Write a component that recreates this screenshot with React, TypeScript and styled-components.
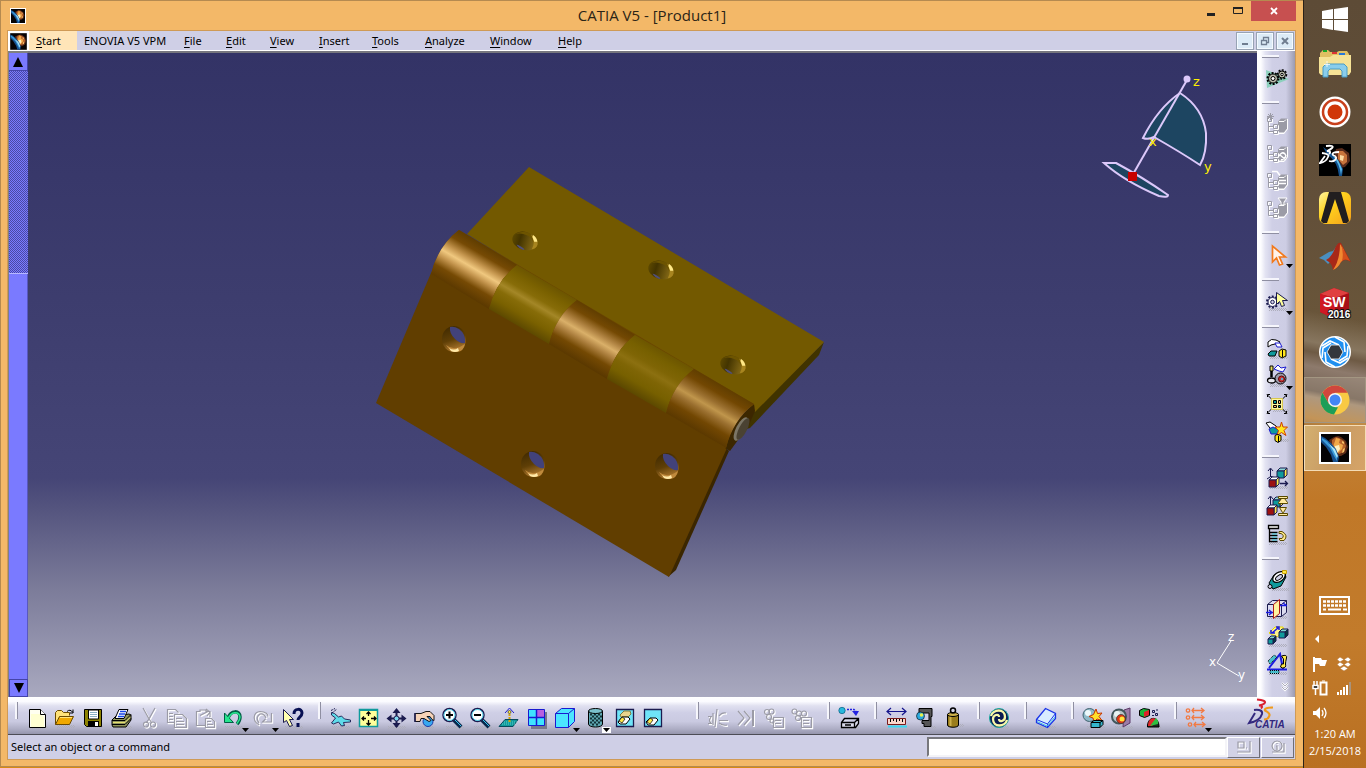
import React from "react";
import styled, { createGlobalStyle, css } from "styled-components";

const Global = createGlobalStyle`
  *, *::before, *::after { box-sizing: border-box; }
  body { margin: 0; background: #d98a12; font-family: "Noto Sans", "Open Sans", sans-serif; font-size: 11px; color: #000; }
  button, input { font: inherit; color: inherit; margin: 0; padding: 0; border: 0; background: none; border-radius: 0; }
  svg { display: block; }
`;

/* ---------- page frame ---------- */
const Desktop = styled.div`
  display: grid;
  grid-template-columns: minmax(0, 1fr) 63px;
  min-height: 100vh;
`;
const Window = styled.main`
  display: flex;
  flex-direction: column;
  background: #f3b868;
  border: 1px solid #b58a50;
  border-right: 0;
  padding: 0 8px 7px 7px;
  margin-bottom: 1px;
`;
const TitleBar = styled.header`
  display: grid;
  grid-template-columns: 100px 1fr 100px;
  height: 30px;
  margin-right: -1px;
`;
const AppIcon = styled.div`
  padding: 7px 0 0 2px;
`;
const Title = styled.h1`
  margin: 0;
  font-family: "Open Sans", "Noto Sans", sans-serif;
  font-size: 15px;
  font-weight: 400;
  line-height: 29px;
  text-align: center;
  color: #2b2416;
`;
const Caption = styled.div`
  display: flex;
  justify-content: flex-end;
`;
const CaptionButton = styled.button<{ $close?: boolean }>`
  display: grid;
  place-items: center;
  width: ${(p) => (p.$close ? 45 : 27)}px;
  height: 20px;
  background: ${(p) => (p.$close ? "#c75050" : "transparent")};
`;
const Client = styled.div`
  flex: 1;
  display: flex;
  flex-direction: column;
  outline: 1px solid #cf9a56;
  background: #cfcfe6;
`;

/* ---------- menu ---------- */
const MenuBar = styled.nav`
  display: flex;
  height: 20px;
  background: #cfcfe6;
  border-bottom: 1px solid #fff;
`;
const MenuIcon = styled.div`
  width: 21px;
  padding: 1px 0 0 1px;
  background: #fff;
`;
const MenuItem = styled.button<{ $active?: boolean; $width: number; $pad?: number }>`
  width: ${(p) => p.$width}px;
  padding-left: ${(p) => p.$pad ?? 12}px;
  text-align: left;
  line-height: 19px;
  white-space: nowrap;
  background: ${(p) => (p.$active ? "#ffe5b8" : "transparent")};
  u { text-underline-offset: 2px; }
`;
const MdiButtons = styled.div`
  display: flex;
  gap: 2px;
  margin-left: auto;
  padding: 1px 1px 0 0;
`;
const MdiButton = styled.button`
  display: grid;
  place-items: center;
  width: 18px;
  height: 18px;
  border: 1px solid #97a3b4;
  background: #dcebf7;
  box-shadow: inset 0 0 0 1px #f4faff;
`;

/* ---------- work area ---------- */
const WorkArea = styled.div`
  flex: 1;
  display: grid;
  grid-template-columns: 20px minmax(0, 1fr) 38px;
  min-height: 645px;
`;
const ScrollRail = styled.div`
  display: flex;
  flex-direction: column;
  border: 1px solid #808080;
  border-width: 2px 0 0 1px;
  background: #7a7aff;
`;
const ScrollButton = styled.button<{ $down?: boolean }>`
  display: grid;
  place-items: center;
  height: 18px;
  border: 1px solid #4444a8;
  border-width: ${(p) => (p.$down ? "1px" : "0 1px 1px 0")};
  background: #7a7aff;
`;
const ScrollTrack = styled.div`
  height: 203px;
  background: repeating-conic-gradient(#7a7aff 0 25%, #4a4aa4 0 50%) 0 0 / 2px 2px;
  border-bottom: 1px solid #b8b8ff;
`;
const ScrollThumb = styled.div`
  flex: 1;
  border-right: 1px solid #5858c0;
`;
const Viewport = styled.section`
  position: relative;
  border-top: 2px solid #76767e;
  background: linear-gradient(#333366 0, #3d3d6e 38%, #454576 66%, #55557f 71%, #7b7b99 83%, #a9a9bf 100%);
`;
const Scene = styled.svg`
  position: absolute;
  inset: 0;
  width: 100%;
  height: 100%;
`;

/* ---------- toolbars ---------- */
const SideBar = styled.aside`
  display: flex;
  flex-direction: column;
  gap: 9px;
  padding: 4px 0 0 6px;
  background: linear-gradient(90deg, #fff 0, #fdfdff 10%, #e3e3f2 22%, #cfcfe6 40%, #cdcde4 76%, #b0b0c6 90%, #9a9ab0 100%);
`;
const BottomBar = styled.div`
  display: flex;
  gap: 11px;
  height: 38px;
  padding-left: 7px;
  border-bottom: 1px solid #4d4d55;
  background: linear-gradient(#fff 0, #fbfbff 12%, #e0e0f0 24%, #cfcfe6 42%, #cacae1 66%, #aeaec5 86%, #9696ac 100%);
`;
const ToolGroup = styled.div<{ $vertical?: boolean; $far?: boolean }>`
  display: flex;
  flex-direction: ${(p) => (p.$vertical ? "column" : "row")};
  margin-left: ${(p) => (p.$far ? 19 : 0)}px;
`;
const Grip = styled.div<{ $vertical?: boolean }>`
  background: #f6f6fc;
  ${(p) =>
    p.$vertical
      ? css`width: 17px; height: 3px; margin: 0 0 6px -1px; border-bottom: 1px solid #8f8fa2;`
      : css`width: 3px; height: 17px; margin: 5px 5px 0 0; border-right: 1px solid #8f8fa2;`}
`;
const ToolButton = styled.button<{ $vertical?: boolean; $wide?: boolean }>`
  position: relative;
  width: ${(p) => (p.$wide && !p.$vertical ? 30 : 28)}px;
  height: ${(p) => (p.$wide && p.$vertical ? 29 : 28)}px;
  padding: 2px;
  margin-top: ${(p) => (p.$vertical ? 0 : 7)}px;
`;
const DropMark = styled.svg<{ $lit?: boolean }>`
  position: absolute;
  left: 22px;
  top: 23px;
  padding: 1px;
  background: ${(p) => (p.$lit ? "#fff" : "transparent")};
`;
const Chevron = styled.div`
  padding-left: 18px;
  margin-top: -5px;
`;
const Brand = styled.div`
  margin: 1px 5px 0 auto;
`;

/* ---------- status ---------- */
const StatusBar = styled.footer`
  display: flex;
  align-items: center;
  height: 24px;
  padding: 0 0 0 3px;
  background: #cfcfe6;
`;
const StatusText = styled.span`
  flex: 1;
  line-height: 16px;
`;
const CommandInput = styled.input`
  width: 300px;
  height: 20px;
  border: 2px solid;
  border-color: #77777c #f4f4f8 #f4f4f8 #77777c;
  background: #fff;
  outline: 0;
`;
const StatusButton = styled.button`
  display: grid;
  place-items: center;
  width: 33px;
  height: 21px;
  margin-right: 1px;
  border: 1px solid;
  border-color: #fff #6e6e78 #6e6e78 #fff;
  background: #d2d2e6;
`;

/* ---------- taskbar ---------- */
const Taskbar = styled.aside`
  display: flex;
  flex-direction: column;
  border-left: 1px solid #2a2118;
  background:
    linear-gradient(11deg, transparent 0 334px, #c58a3e 345px, #a98f72 366px, #756354 372px, #8d7a6c 396px, #6e5a44 410px, #87765f 420px, transparent 450px),
    linear-gradient(#5d4b36 0, #624f39 200px, #6a563a 330px, #7b6549 400px, #c28035 445px, #c07828 500px, #c27b2b 640px, #b97022 100%);
`;
const TaskButton = styled.button<{ $state?: "open" | "active"; $short?: boolean }>`
  display: grid;
  place-items: center;
  height: ${(p) => (p.$short ? 40 : 46)}px;
  margin: ${(p) => (p.$short ? "0" : "1px 0")};
  ${(p) =>
    p.$state === "open" &&
    css`border: 1px solid #a39682; background: rgba(190, 180, 165, 0.25);`}
  ${(p) =>
    p.$state === "active" &&
    css`border: 1px solid #f4dcb6; background: linear-gradient(110deg, #d4b070, #c99c64 50%, #d6a468);`}
`;
const Tray = styled.div`
  margin-top: auto;
  padding-bottom: 9px;
  color: #fff;
`;
const TrayRow = styled.div<{ $h: number; $left?: number }>`
  display: flex;
  align-items: center;
  gap: 8px;
  height: ${(p) => p.$h}px;
  padding-left: ${(p) => p.$left ?? 8}px;
`;
const Clock = styled.time`
  display: block;
  font-family: "Open Sans", "Noto Sans", sans-serif;
  line-height: 17px;
  text-align: center;
  white-space: nowrap;
`;

/* ---------- icon drawings, all on a 24px grid ---------- */
const K = "#000";
const N = "#1b1b4f";
const G = "#9b9ba6";
const T = "#0f9a9c";
const Y = "#ffe94a";

const Shade = ({ x = 4, y = 19 }: { x?: number; y?: number }) => (
  <path d={`M${x} ${y + 0.5}h18M${x + 1} ${y + 1.5}h18M${x} ${y + 2.5}h17`} stroke="#aeaebc" strokeDasharray="1 1" />
);
const Emboss = ({ children }: { children: React.ReactNode }) => (
  <>
    <g transform="translate(1 1)" stroke="#fff" fill="none" strokeWidth={1.4}>{children}</g>
    <g stroke={G} fill="none" strokeWidth={1.2}>{children}</g>
  </>
);
/* Disabled product-tree glyph: branch lines, nodes and a solid part */
const Tree = ({ children }: { children?: React.ReactNode }) => (
  <>
    <path d="M14 10l3-3h6v10l-4 5h-9v-2h4z" fill="#fff" />
    <path d="M13 9.500l3-3h6v10l-3 4h-6z" fill={G} />
    <path d="M14 9.500h5l2-2" stroke="#fff" fill="none" />
    <Emboss><path d="M3.500 9v10.500h5M3.500 14.500h5M2.500 5.500h4v4h-4zM8.500 12.500h4v4h-4zM8.500 18.500h4v3h-4z" strokeWidth={1} /></Emboss>
    {children}
  </>
);
const Cube = ({ x, y, s, f, t, r }: { x: number; y: number; s: number; f: string; t: string; r: string }) => (
  <g stroke={N}>
    <path d={`M${x} ${y}l3-3h${s}l-3 3z`} fill={t} />
    <path d={`M${x + s} ${y}l3-3v${s}l-3 3z`} fill={r} />
    <path d={`M${x} ${y}h${s}v${s}h-${s}z`} fill={f} />
  </g>
);
const Glass = ({ plus }: { plus?: boolean }) => (
  <>
    <Shade x={6} y={20} />
    <path d="M14 14l7 7" stroke="#0a2a4e" strokeWidth="4" />
    <path d="M14 13l7 7" stroke="#38c8f0" />
    <circle cx="9.500" cy="9" r="6.500" fill="#fff" stroke={N} strokeWidth="1.500" />
    <circle cx="9.500" cy="9" r="5.500" fill="none" stroke="#4bd0e8" />
    <path d={plus ? "M9.500 5.500v7M6 9h7" : "M6 9h7"} stroke={K} strokeWidth="2" />
  </>
);

const icons: Record<string, React.ReactNode> = {
  new: <><Shade x={5} y={20} /><path d="M4.500 3.500h11l5 5v13h-16z" fill="#fffff0" stroke={K} /><path d="M6 8h9l4 3v10H6z" fill="#ffffd2" /><path d="M15.500 3.500v5h5" fill="#fff" stroke={K} /></>,
  open: <><Shade /><path d="M2.500 18.500v-12l2-2h4l2 2h6v3" fill="#ffe27a" stroke="#6b4a00" /><path d="M2.500 18.500l4-8h14l-4 8z" fill="#f0a800" stroke="#6b4a00" /><path d="M7 11.500h12" stroke="#ffe27a" /><path d="M14 5.500q3-3 6 1m0-3v3.500h-3" stroke={K} fill="none" /></>,
  save: <><Shade /><path d="M3.500 3.500h17v17h-15l-2-2z" fill="#8d8200" stroke={K} /><path d="M7.500 4h10v9h-10z" fill="#fff" stroke={K} /><path d="M9 6.500h7M9 8.500h7M9 10.500h7" stroke="#8ab0c4" /><path d="M7 15h11v5.500H7z" fill={K} /><path d="M14 16h3v4h-3z" fill="#fff" /></>,
  print: <><Shade x={5} y={20} /><path d="M3 14l4-4 13-2 2 1v5l-5 7H4l-1-2z" fill="#8f945c" stroke={K} /><path d="M10 3.500h9l-4 9H6z" fill="#fff" stroke={K} /><path d="M11 5.500h6M10 8h6M9 10.500h6" stroke="#1845e8" strokeWidth="1.500" /><path d="M3 14.500h13l6-6M3 18.500h13l6-6" fill="none" stroke={K} /><path d="M4 16.500h12l5-5" fill="none" stroke="#e8e070" /></>,
  cut: <Emboss><path d="M6 2l6 11 3 4M18 2l-6 11-3 4M9 16a2.500 2.500 0 1 0 0 5 2.500 2.500 0 0 0 0-5M16 16a2.500 2.500 0 1 0 0 5 2.500 2.500 0 0 0 0-5" /></Emboss>,
  copy: <Emboss><path d="M2.500 3.500h8l3 3M2.500 3v13.500H9M4 7.500h4M4 10.500h4M4 13.500h4M9.500 8.500h8l4 4v9h-12zM11 12.500h6M11 15.500h8M11 18.500h8" /></Emboss>,
  paste: <Emboss><path d="M12 19.500H3.500v-14H7V4h6v1.500h4V11M7 9.500l8-4M13 3l4 3-3 4M12.500 12.500h6l3 3v6h-9zM14 15.500h4M14 18.500h6" /></Emboss>,
  undo: <><Shade y={20} /><path d="M7 12C10 4 19 4 19 11q0 4-3 7" fill="none" stroke="#005e45" strokeWidth="3.500" /><path d="M3.500 7v9.500h9z" fill="#26e68e" stroke="#005e45" /><path d="M7 13C10 5 18 5 19 11q0 3-3 6.500" fill="none" stroke="#26e68e" strokeWidth="1.500" /></>,
  redo: <Emboss><path d="M8 19C1 15 2 6 9 5.500c6 0 8 3 8 5M20.500 7v9h-9l3-3M8 17Q4 11 9 8q4-1 6 4" /></Emboss>,
  help: <><Shade y={20} /><path d="M13 8c0-6 8-6 8-1 0 4-4 4-4 7M17 17v4" stroke="#070f52" fill="none" strokeWidth="3" /><path d="M2.500 3.500v13l3-2 3 6 3-1-3-6h4z" fill="#ffffb0" stroke={N} /></>,
  fly: <><Shade y={20} /><path d="M3.500 6.500l3 1 4 3.500 3-1 3 3 6 1v2l-7 .5 1 3-3 .5-3-4-5 2-2-1 4-5-4-3z" fill="#5fdcea" stroke={N} strokeWidth=".9" /><path d="M3 4.500l4-2M4 7l5-4" stroke={N} strokeDasharray="2 1" /></>,
  fit: <><path d="M3.500 3.500h18v17h-18z" fill="#ffff9a" stroke={T} strokeWidth="1.500" /><path d="M3 4h19" stroke={T} strokeWidth="2" /><path d="M12.500 6v4M12.500 14v5M6 12.500h4M15 12.500h5M10.500 8l2-2 2 2M10.500 17l2 2 2-2M8 10.500l-2 2 2 2M18 10.500l2 2-2 2" fill="none" stroke={K} strokeWidth="1.300" /></>,
  pan: <><Shade y={20} /><path d="M12.500 4v17M4 12.500h17" stroke={N} strokeWidth="2" /><path d="M12.500 2l4 5h-8zM12.500 22l4-5h-8zM2.500 12.500l5-4v8zM22.500 12.500l-5-4v8z" fill={N} /><circle cx="12.500" cy="12.500" r="2.500" fill="#7fd8f0" stroke={N} /></>,
  rotate: <><Shade y={20} /><circle cx="16" cy="15.500" r="5" fill="#38a8f0" stroke="#1a3aa8" /><path d="M3 7.500h6l5-2h4l4 4v5l-2-1-2-3h-3l4 4-2 1-5-3H9l-1 3H3z" fill="#f6d3b8" stroke={K} strokeWidth=".9" /><path d="M3 7v9" stroke={N} strokeWidth="1.500" /></>,
  zoomin: <Glass plus />,
  zoomout: <Glass />,
  normal: <><path d="M3 20.500l6-7h13l-5 7z" fill={T} stroke="#064a5a" /><path d="M6 18h13M8 16h13" stroke="#5ed0c8" strokeDasharray="1 1" /><path d="M13.500 5v12" stroke="#d6a300" strokeWidth="2" strokeDasharray="2 1" /><path d="M9 7l4.500-5L18 7" fill="none" stroke="#2222d0" /><circle cx="13.500" cy="6" r="1.500" fill={Y} stroke={K} strokeWidth=".5" /></>,
  views: <><path d="M7 6h16v17H7z" fill="#77778c" /><path d="M4.500 3.500h16v16h-16z" fill="#3fe3ff" stroke="#1a1ad0" /><path d="M13 4h7v7h-7z" fill="#b85fe0" /><path d="M12.500 3v17M4 11.500h17" stroke="#1a1ad0" strokeWidth="1.500" /></>,
  iso: <><path d="M3.500 7.500l6-5h13v13l-6 6h-13z" fill="#4be6ff" stroke="#1a1ad0" /><path d="M3.500 7.500h13v14M16.500 7.500l6-5" fill="none" stroke="#1a1ad0" /></>,
  shading: <><Shade x={7} y={20} /><path d="M6.500 5v13c0 4 14 4 14 0V5" fill="#5fa8b2" stroke={K} /><path d="M8 8.500h12M8 12.500h12M8 16.500h12" stroke="#123238" strokeWidth="2" strokeDasharray="2 2" /><path d="M10 10.500h10M10 14.500h10M10 18.500h8" stroke="#123238" strokeWidth="2" strokeDasharray="2 2" /><ellipse cx="13.500" cy="5" rx="7" ry="2.500" fill="#7ac0cc" stroke={K} /></>,
  hide: <><Shade y={20} /><path d="M4.500 3.500h17v17h-17z" fill="#6fe4f8" stroke={N} strokeWidth="1.300" /><path d="M8 9l4-4h6l1 3-3 3H9z" fill="#e8d48c" stroke="#7c7c40" /><path d="M6 16l4-5h6l2 2-4 5H8z" fill="#fff" stroke={K} /><path d="M7 15l3-4 3 2-3 4z" fill={Y} stroke={K} strokeWidth=".7" /></>,
  swap: <><Shade y={20} /><path d="M4.500 3.500h17v17h-17z" fill="#6fe4f8" stroke={N} strokeWidth="1.300" /><path d="M6 16l4-4h6l2 2-4 5H8z" fill="#fff" stroke={K} /><path d="M7 16l3-4 3 2-3 4z" fill={Y} stroke={K} strokeWidth=".7" /></>,
  flow: <Emboss><path d="M2 10.500h4M2 17.500h4M7 7v12M5 11q-3 4 0 6M11 3L9 21M13 10q3-4 7-3M13 14.500h9M13 17q4 3 8 2" /></Emboss>,
  skip: <Emboss><path d="M4 5l6 7-6 7M10 5l6 7-6 7" /><path d="M19 4v16" strokeWidth={2} /></Emboss>,
  gearlist: <Emboss><circle cx="5" cy="6" r="2.500" /><circle cx="9.500" cy="5.500" r="2.500" /><circle cx="7" cy="11" r="2.500" /><circle cx="10" cy="15" r="2" /><path d="M11.500 11.500h10v10h-10zM13 14.500h6M13 17.500h6" /></Emboss>,
  gearlist2: <Emboss><circle cx="4.500" cy="5.500" r="2.500" /><circle cx="9" cy="7.500" r="2.500" /><circle cx="14" cy="7.500" r="2.500" /><circle cx="8" cy="12" r="2.500" /><path d="M11.500 11.500h10v10h-10zM13 14.500h6M13 17.500h6" /></Emboss>,
  catalog: <><Shade y={20} /><circle cx="5" cy="4.500" r="3.200" fill="#28b9dc" stroke="#075a80" strokeWidth=".7" /><path d="M10 3.500h7l2 2" stroke="#2222e0" strokeWidth="1.500" strokeDasharray="2 1" /><path d="M15 5h7l-3 5z" fill="#2222e0" /><path d="M4.500 16.500l3-4h14v5l-3 4h-14zM4.500 16.500h13l4-4M17.500 16.500v5M8 19h6" fill="#dcdcec" stroke={K} strokeWidth="1.300" /></>,
  ruler: <><path d="M3 5.500h19M7 2L3 5.500 7 9M18 2l4 3.500L18 9" fill="none" stroke="#14148c" strokeWidth="1.200" /><path d="M4 19.500h19v2H4z" fill="#39d6f0" /><path d="M3.500 12.500h18v6h-18z" fill="#fbd6ca" stroke="#7a1a1a" /><path d="M6.500 13v3M9.500 13v2M12.500 13v3M15.500 13v2M18.500 13v3" stroke={K} /></>,
  clamp: <><Shade x={8} y={20} /><path d="M7 2.500h13v8h-1v10h-7v-3h-2v-3h7V7H7z" fill="#565656" stroke={K} /><circle cx="8.500" cy="10" r="4" fill="#2aa8e0" stroke={K} strokeWidth=".6" /><circle cx="9.500" cy="9" r="1.800" fill="#e8f048" /></>,
  weight: <><Shade x={10} y={18} /><path d="M7.500 8.500V19c0 3 11 3 11 0V8.500z" fill="#9a7d1c" stroke={K} /><path d="M10.500 10v10" stroke="#cdb04a" strokeWidth="2" /><ellipse cx="13" cy="8.500" rx="5.500" ry="2" fill="#cdb04a" stroke={K} /><circle cx="13" cy="4.500" r="2.500" fill="none" stroke={K} strokeWidth="1.500" /></>,
  swirl: <><Shade y={20} /><circle cx="12" cy="12" r="9.500" fill="#0a1a50" stroke="#19a9a0" /><path d="M4 10c2-7 14-8 14 1 0 4-6 6-6 2M20 14c-2 7-14 8-14-1 0-4 6-6 6-2" stroke="#f8f8a8" strokeWidth="2.300" fill="none" /></>,
  book: <><Shade y={20} /><path d="M2.500 13.500l9-11 10 5v5l-8 9-11-5z" fill="#d8ecff" stroke="#1a35e8" strokeWidth="1.300" /><path d="M2.500 13.500l11 4.500 8-10.500M13.500 18v3.500" fill="none" stroke="#1a35e8" /><path d="M3 15.500l10 4.500 8-9" fill="none" stroke="#4bc0dc" /></>,
  render: <><Shade x={6} y={20} /><circle cx="8.500" cy="9" r="6.500" fill="#8fb9c8" stroke="#41626e" /><circle cx="7" cy="7" r="3" fill="#edf8fa" /><path d="M15 3l1.500 4.500L21 7l-3 3.500 3 4-5-1.500-3 3-1-4-4-1.500 4.500-2z" fill="#ffe02a" stroke="#c83200" /><path d="M10 16.500l3-2h9v4l-3 3h-9zM10 16.500h9v5M19 16.500l3-2" fill="#35b6cc" stroke={K} /></>,
  material: <><Shade x={6} y={20} /><path d="M15 4l6-2v15l-7 4z" fill="#9d7da8" stroke="#5d3a68" /><circle cx="10" cy="10.500" r="7" fill="#b8c5c8" stroke="#42575d" strokeWidth="2" /><circle cx="8" cy="8" r="3" fill="#e8f2f4" /><circle cx="12" cy="13" r="4.500" fill="#e13414" stroke="#333" strokeWidth=".7" /><circle cx="13" cy="13" r="2.500" fill="#ffe53a" /></>,
  shapes: <><Shade x={10} y={20} /><path d="M2.500 4.500l4-2 6 1v6l-5 2-5-2z" fill="#19b53a" stroke={K} /><path d="M7 6l5-2v5l-5 2z" fill="#e0202a" /><path d="M15.500 4.500h2v2h-2zM18.500 7.500h2v2h-2zM19 4h2M15 9.500h2" fill="none" stroke={N} /><path d="M10.500 21C10 10 22 9 22 21z" fill="#1c2c20" stroke={K} /><path d="M11 20c0-9 7-9 9-6l-5 6z" fill="#e02828" /><path d="M13 20l6-8q3 3 2 6z" fill="#2fc040" /></>,
  constraints: <g stroke="#f27a43" fill="none" strokeWidth="1.300"><circle cx="4" cy="4.500" r="1.700" /><circle cx="4" cy="11.500" r="1.700" /><circle cx="6" cy="18.500" r="1.700" /><path d="M8 4.500h12M17 2l3 2.500L17 7M10 2L8 4.500 10 7M8 11.500h12M17 9l3 2.500-3 2.500M10 9l-2 2.500 2 2.500M10 18.500h11M18 16l3 2.500-3 2.500M12 16l-2 2.500 2 2.500" /></g>,

  gears: <><path d="M1 4l23 9-22 9z" fill="#8bd0bc" /><circle cx="8" cy="12.500" r="5.500" fill="none" stroke={K} strokeWidth="2" strokeDasharray="2 1.400" /><circle cx="8" cy="12.500" r="4.500" fill="#b8b8a8" stroke={K} /><circle cx="8" cy="12.500" r="2" fill="#fff" stroke={K} /><circle cx="17" cy="8.500" r="4.500" fill="none" stroke={K} strokeWidth="1.500" strokeDasharray="2 1.400" /><circle cx="17" cy="8.500" r="3.500" fill="#b8b8a8" stroke={K} /><circle cx="17" cy="8.500" r="1.200" fill="#fff" stroke={K} /></>,
  tree1: <Tree><path d="M5.500 1v7M2 4.500h7M3 2l5 5M8 2L3 7" stroke={G} /></Tree>,
  tree2: <Tree><path d="M14 16q3-5 6-2t-4 6M15 15l6 5" stroke="#fff" strokeWidth="1.500" fill="none" /></Tree>,
  tree3: <Tree><path d="M7 3.500h5l3 4M14 12.500h7M14 15.500h7" stroke="#fff" strokeWidth="1.500" fill="none" /></Tree>,
  tree4: <Tree><path d="M13 2h9l-3 4v3h-3V6z" fill={G} stroke="#fff" /></Tree>,
  select: <path d="M7.500 3v16l4-4 3 7 3-1-3-7h6z" fill="#fff3ea" stroke="#f27a1c" strokeWidth="1.700" />,
  gearselect: <><Shade y={18} /><circle cx="7.500" cy="12" r="5.500" fill="none" stroke={N} strokeWidth="2" strokeDasharray="2 1.500" /><circle cx="7.500" cy="12" r="4.500" fill="#fff" stroke={N} /><circle cx="7.500" cy="12" r="1.800" fill="#cfcfe6" stroke={N} /><path d="M11.500 2.500v12l3-3 2 5 3-1-2-5h5z" fill="#ffff9a" stroke={N} /></>,
  handparts: <><Shade x={5} y={20} /><path d="M3 6q3-4 8-2l4 2-2 3-3-1-4 1-3 2z" fill="#fff" stroke={K} /><path d="M10 7h5l2 4h-5z" fill="#fff" stroke="#1a1ad0" /><path d="M3 18l3-3h6l-2 5H4z" fill={T} stroke={K} /><path d="M14 15l3-2 4 1v6l-4 2-3-2z" fill="#ffe61e" stroke={K} /><path d="M17.500 14v7" stroke={K} /></>,
  robot: <><Shade x={5} y={20} /><path d="M9 5l4-4 3 3 5-1-3 5-4-1z" fill="#fff" stroke="#1a1ad0" /><path d="M6.500 6v7" stroke={K} strokeWidth="2.500" /><path d="M5 2h3v5H5z" fill="#e8e060" stroke={K} /><ellipse cx="6.500" cy="16.500" rx="4" ry="2.500" fill="#e8e8f0" stroke={K} strokeWidth="1.300" /><circle cx="15.500" cy="14.500" r="5.500" fill="#9a9aa8" stroke={K} /><circle cx="16.500" cy="15" r="3" fill="#c43a3a" stroke="#600" /><circle cx="17" cy="15" r="1" fill="#3cf" /></>,
  explode: <><Shade x={8} y={17} /><path d="M2 2.500l6 6M22 2.500l-6 6M2 21.500l6-6M22 21.500l-6-6M2.500 5V2.500H5M19 2.500h2.500V5M2.500 19v2.500H5M19 21.500h2.500V19" stroke={K} fill="none" /><path d="M6.500 6.500h11v11h-11z" fill="#fff6a0" stroke="#d8c850" /><path d="M8.500 8.500h3v3h-3zM13.500 13.500h2v2h-2z" fill={T} stroke={K} /><path d="M13.500 8.500h2v3h-2zM8.500 13.500h3v2h-3z" fill="#ffb870" stroke={K} /></>,
  star: <><Shade x={10} y={19} /><path d="M1 3l4-1 6 4 3 4-4 2-5-4z" fill="#fff" stroke={K} /><path d="M4 9l4-2 6 3-2 4H6z" fill={T} stroke="#1a1ad0" /><path d="M16.500 2l1.500 5h4.500l-3.500 3.500 2 5-4.500-3-4.500 3 1.500-5L10 7h5z" fill="#ffe61e" stroke="#d04000" /><path d="M10 15.500l2-1 4 1v5l-3 2-3-2z" fill="#ffe61e" stroke={K} /><path d="M13.500 16v6" stroke={K} /></>,
  move: <><Shade x={5} y={20} /><path d="M5.500 11V3M3 5l2.500-3L8 5M5 10l8 3M5 11l-3 2" stroke={N} fill="none" /><Cube x={12} y={5} s={7} f={T} t="#8fd8d8" r={Y} /><Cube x={4} y={14} s={7} f="#9c1010" t="#fff" r={Y} /><path d="M15 17.500h7M20 15l2.500 2.500L20 20" stroke={N} fill="none" strokeWidth="1.300" /></>,
  manipulate: <><path d="M5.500 11V3M3 5l2.500-3L8 5" stroke={N} fill="none" /><Cube x={8} y={6} s={7} f={T} t="#8fd8d8" r={Y} /><Cube x={2} y={14} s={7} f="#9c1010" t="#fff" r={Y} /><path d="M13.500 2.500h9v2h-9zM13.500 9.500h9v-1l-3-4h-3l-3 4zM13.500 19.500h9v2h-9zM14.500 13.500h7l-3 5h-1z" fill="#ffe9a0" stroke="#5a4a00" /></>,
  list: <><Shade y={20} /><path d="M3.500 3.500h10v3h-10z" fill="#fff" stroke={K} strokeWidth="1.300" /><path d="M4.500 7v12.500h8M4.500 10.500h8M4.500 13.500h8M4.500 16.500h8" stroke={K} fill="none" strokeWidth="1.300" /><path d="M7 12h5M7 15h5M7 18h5" stroke="#38c8d8" /><path d="M14 9.500h3q7 4 2 9h-4l-1-2h3q3-3-1-5h-2z" fill="#ffe98a" stroke="#5a4a00" /></>,
  clash: <><Shade x={7} y={20} /><path d="M4 15l5-8 9-4 3 6-5 9-8 3z" fill={T} stroke={K} /><ellipse cx="14" cy="9" rx="7" ry="4.500" fill="#fff" stroke={K} strokeWidth="1.300" transform="rotate(-35 14 9)" /><ellipse cx="14" cy="9.500" rx="4" ry="2" fill="#cfcfe6" stroke={K} transform="rotate(-35 14 9.500)" /><circle cx="5" cy="18.500" r="2" fill="#cfcfe6" stroke={K} /><path d="M17.500 2.500h4v3h-4z" fill={Y} stroke="#c8a000" /></>,
  section: <><Shade y={20} /><path d="M2.500 8.500l5-4h14v12l-5 4h-14z" fill="#dcdcf0" stroke={N} /><path d="M2.500 8.500h14v12M16.500 8.500l5-4" fill="none" stroke={N} /><path d="M8.500 8.500l6-5v14l-6 5z" fill="#fff3a0" stroke="#b01818" /><path d="M15 9.500h7M1 16.500h7M4 14l3 2.500L4 19M18 7l3 2" stroke="#1a1ae0" fill="none" strokeWidth="1.300" /></>,
  distance: <><Shade y={20} /><path d="M4 9l6-6h8l1 4-7 6z" fill="#fff38a" stroke="#e8d800" /><Cube x={3} y={15} s={5} f={T} t="#7fd8d0" r="#063b3c" /><Cube x={14} y={8} s={6} f={T} t="#7fd8d0" r="#063b3c" /><path d="M7 9l6-5M6 6v3h4M11 3h3v3" stroke="#1a1ae0" fill="none" strokeWidth="1.500" /></>,
  annotate: <><Shade y={20} /><path d="M2 17.500h20M4 16L15 2l3 15" fill="none" stroke="#1a1ae0" strokeWidth="2" /><path d="M3 9l6-6 3 2-7 7zM5 18.500h9v3H5z" fill="#48c0cc" stroke={K} strokeDasharray="1 1" /><path d="M16.500 4q6-2 5 2t-1 6q1 4-3 4l-2-1 1-3h2V7z" fill={Y} stroke={K} /></>,
};

type Tool = { id: string; label: string; drop?: boolean; lit?: boolean; stretch?: boolean };
type Group = { tools: Tool[]; far?: boolean };
const t = (id: string, label: string, extra: Partial<Tool> = {}): Tool => ({ id, label, ...extra });

const bottomGroups: Group[] = [
  { tools: [t("new", "New"), t("open", "Open"), t("save", "Save"), t("print", "Print"), t("cut", "Cut"), t("copy", "Copy"), t("paste", "Paste"), t("undo", "Undo", { drop: true, stretch: true }), t("redo", "Redo", { drop: true, stretch: true }), t("help", "What's This?")] },
  { tools: [t("fly", "Fly Mode"), t("fit", "Fit All In"), t("pan", "Pan"), t("rotate", "Rotate"), t("zoomin", "Zoom In"), t("zoomout", "Zoom Out"), t("normal", "Normal View"), t("views", "Create Multi-View"), t("iso", "Isometric View", { drop: true, stretch: true }), t("shading", "Shading", { drop: true, lit: true, stretch: true }), t("hide", "Hide/Show"), t("swap", "Swap visible space")] },
  { far: true, tools: [t("flow", "Synchronize"), t("skip", "Skip"), t("gearlist", "Knowledge List"), t("gearlist2", "Relations List")] },
  { tools: [t("catalog", "Catalog Browser")] },
  { tools: [t("ruler", "Measure Between"), t("clamp", "Measure Item"), t("weight", "Measure Inertia")] },
  { tools: [t("swirl", "Update All")] },
  { tools: [t("book", "Design Table")] },
  { tools: [t("render", "Quick Render"), t("material", "Apply Material"), t("shapes", "Scene")] },
  { tools: [t("constraints", "Constraints", { drop: true })] },
];
const sideGroups: Group[] = [
  { tools: [t("gears", "Assembly Design")] },
  { tools: [t("tree1", "New Component"), t("tree2", "Replace Component"), t("tree3", "Reorder Tree"), t("tree4", "Load Components")] },
  { tools: [t("select", "Select", { drop: true, stretch: true })] },
  { tools: [t("gearselect", "Selection Sets", { drop: true, stretch: true })] },
  { tools: [t("handparts", "Snap"), t("robot", "Smart Move", { drop: true }), t("explode", "Explode"), t("star", "Stop Manipulate")] },
  { tools: [t("move", "Translation"), t("manipulate", "Manipulation"), t("list", "Bill of Material")] },
  { tools: [t("clash", "Clash"), t("section", "Sectioning"), t("distance", "Distance Analysis"), t("annotate", "Annotation")] },
];

const ToolGroups = ({ groups, vertical }: { groups: Group[]; vertical?: boolean }) => (
  <>
    {groups.map((g, i) => (
      <ToolGroup key={i} $vertical={vertical} $far={g.far}>
        <Grip $vertical={vertical} />
        {g.tools.map((tool) => (
          <ToolButton key={tool.id} $vertical={vertical} $wide={tool.stretch} aria-label={tool.label}>
            <svg width="24" height="24" viewBox="0 0 24 24" fill="none">{icons[tool.id]}</svg>
            {tool.drop && (
              <DropMark $lit={tool.lit} width="9" height="6" viewBox="0 0 7 4">
                <path d="M0 0h7L3.500 4z" fill="#000" />
              </DropMark>
            )}
          </ToolButton>
        ))}
      </ToolGroup>
    ))}
  </>
);

/* Comet picture used for the application everywhere */
const Comet = ({ size }: { size: number }) => (
  <svg width={size} height={size} viewBox="0 0 32 32">
    <rect width="32" height="32" fill="#fff" />
    <rect x="2" y="2" width="28" height="28" fill="#050304" />
    <path d="M10 8l5-3 4-1 3 1 5 4 2 6-2 6-5 3-5 0-3-7z" fill="#5a2a18" />
    <path d="M13 8l4-3 3 1 5 3 2 5-2 6-5 2-4-4-3-5z" fill="#b8642c" />
    <path d="M17 6l4 1-1 4 4 2-1 4-4 4-5-5 1-4z" fill="#f0a848" />
    <path d="M16 14l4-1 1 4-3 4-3-4z" fill="#fff0c0" />
    <path d="M23 9l2 1v2l-2-1zM24 17l2-1-1 4-2 1z" fill="#f7c26a" />
    <path d="M2 4l4 2 6 5 5 6 3 8-1 5h-5l-2-7-5-8-5-5z" fill="#174f8c" />
    <path d="M3 6l5 3 6 7 4 7v6l-3-5-4-8-8-8z" fill="#3a9ad8" />
    <path d="M10 12l6 5 3 7-1 2-4-8z" fill="#a8e4f8" />
  </svg>
);

/* ---------- 3D scene ---------- */
const barrel = [
  { x: 459, y: 230, w: 58, h: 35, fill: "url(#brown1)" },
  { x: 517, y: 265, w: 60, h: 35, fill: "url(#olive1)" },
  { x: 577, y: 300, w: 58, h: 35, fill: "url(#brown2)" },
  { x: 635, y: 335, w: 59, h: 34, fill: "url(#olive2)" },
  { x: 694, y: 369, w: 60, h: 35, fill: "url(#brown3)" },
];
const Metal = ({ id, edge, mid, soft, hi, low }: { id: string; edge: string; mid: string; soft: string; hi: string; low: string }) => (
  <linearGradient id={id} gradientUnits="userSpaceOnUse" x1="459" y1="230" x2="432" y2="276">
    <stop offset="0" stopColor={edge} />
    <stop offset=".18" stopColor={mid} />
    <stop offset=".36" stopColor={soft} />
    <stop offset=".48" stopColor={hi} />
    <stop offset=".6" stopColor={soft} />
    <stop offset=".78" stopColor={mid} />
    <stop offset="1" stopColor={low} />
  </linearGradient>
);
const HingeScene = () => (
  <Scene viewBox="28 53 1229 644" preserveAspectRatio="xMidYMid meet" role="img" aria-label="Hinge assembly">
    <defs>
      <Metal id="brown1" edge="#5f3d00" mid="#764a04" soft="#c4954e" hi="#f0c87f" low="#5a3800" />
      <Metal id="brown2" edge="#5f3d00" mid="#744903" soft="#b18443" hi="#dab069" low="#5a3800" />
      <Metal id="brown3" edge="#5f3d00" mid="#724702" soft="#9b7030" hi="#c0964c" low="#5a3800" />
      <Metal id="olive1" edge="#6b5400" mid="#7a6100" soft="#876c08" hi="#a48727" low="#5c4800" />
      <Metal id="olive2" edge="#6b5400" mid="#776000" soft="#7f6505" hi="#8c7010" low="#5c4800" />
      <linearGradient id="boreOlive"><stop offset="0" stopColor="#5c4800" /><stop offset=".3" stopColor="#433400" /><stop offset="1" stopColor="#92741a" /></linearGradient>
      <linearGradient id="boreBrown" x1="0" y1="0" x2=".3" y2="1"><stop offset="0" stopColor="#3c2700" /><stop offset=".6" stopColor="#5f3f06" /><stop offset="1" stopColor="#a8742c" /></linearGradient>
    </defs>
    <path d="M824 342l-5 13-69 73-14 4 19-22z" fill="#403300" />
    <path d="M529 167l295 175-69 70-288-178z" fill="#735900" />
    {[[525, 241], [661, 270], [733, 365]].map(([x, y]) => (
      <g key={x} transform={`translate(${x} ${y}) rotate(17)`}>
        <ellipse rx="13" ry="9" fill="url(#boreOlive)" />
        <path d="M-12-3q5-6 12-6 8 1 12 7l-3 2q-4-6-9-6-7-1-12 3z" fill="#6d5400" />
        <path d="M4-8q8 2 9 8 0 4-4 6 1-5-1-9z" fill="#a8851f" />
        <path d="M6-8q4 1 6 5l-3 1-3-4z" fill="#ffe887" />
        <path d="M-7 6q2-1 9 2l-1 1q-5 0-8-3z" fill="#504f78" />
      </g>
    ))}
    <path d="M726 448l-58 129 8-7 53-119z" fill="#3b2600" />
    <path d="M431 273l-55 130 293 174 58-129-20-20-270-160z" fill="#613e00" />
    {[[454, 339], [533, 464], [667, 466]].map(([x, y]) => (
      <g key={x} transform={`translate(${x} ${y})`}>
        <ellipse rx="12" ry="13" fill="url(#boreBrown)" />
        <path d="M-8 6q8 7 19-1-1 7-8 8-7 0-11-7z" fill="#c08a3c" />
        <path d="M-5 9q5 3 9 0l1 3q-4 2-8 0z" fill="#ffe9a8" />
        <path d="M-4-12q4-1 9 2 7 5 6 14-5 1-10-4-6-6-5-12z" fill="#42427a" />
      </g>
    ))}
    <path d="M725 448q8-28 29-44l1 7-6 14-19 26z" fill="#3c2700" />
    <path d="M459 230l295 174q-22 16-28 44L431 274q7-28 28-44z" fill="#6b4600" />
    {barrel.map((b) => (
      <path key={b.x} d={`M${b.x} ${b.y}l${b.w} ${b.h}q-21 16-28 44l-${b.w}-${b.h}q7-28 28-44z`} fill={b.fill} />
    ))}
    <ellipse cx="741" cy="429" rx="5" ry="13" transform="rotate(27 741 429)" fill="#7c7666" />
    <ellipse cx="743" cy="429" rx="4" ry="12" transform="rotate(27 743 429)" fill="#4a4232" />

    <g fill="#1d4561" stroke="#dcc8fa" strokeWidth="2">
      <path d="M1180 93q-22 15-37 45 5 2 11-1 28 16 46 28 7-12 6-32-3-25-26-40z" />
      <path d="M1104 163h12q26 14 52 32 0 3-9 1-35-15-55-33z" />
      <path d="M1187 80l-55 96" />
      <circle cx="1187" cy="79" r="2.500" fill="#dcc8fa" />
    </g>
    <rect x="1128" y="172" width="9" height="9" fill="#c80000" />
    <g fill="#fff000" fontFamily="DejaVu Sans, sans-serif" fontSize="13">
      <text x="1193" y="86">z</text><text x="1204" y="171">y</text><text x="1149" y="146">x</text>
    </g>
    <path d="M1231 641l-14 22 22 13" fill="none" stroke="#fff" />
    <g fill="#fff" fontFamily="DejaVu Sans, sans-serif" fontSize="12">
      <text x="1228" y="641">z</text><text x="1238" y="679">y</text><text x="1209" y="666">x</text>
    </g>
  </Scene>
);

const menus: [string, string, number][] = [
  ["F", "ile", 42], ["E", "dit", 44], ["V", "iew", 49], ["I", "nsert", 53], ["T", "ools", 53], ["A", "nalyze", 65], ["W", "indow", 68], ["H", "elp", 50],
];

export default function App() {
  return (
    <>
      <Global />
      <Desktop>
        <Window>
          <TitleBar>
            <AppIcon><Comet size={16} /></AppIcon>
            <Title>CATIA V5 - [Product1]</Title>
            <Caption>
              <CaptionButton aria-label="Minimize"><svg width="10" height="12"><path d="M1 8h8v3H1z" fill="#222" /></svg></CaptionButton>
              <CaptionButton aria-label="Maximize"><svg width="12" height="10"><path d="M1.500 1.500h9v6h-9z" fill="none" stroke="#222" /><path d="M1 1h10v2H1z" fill="#222" /></svg></CaptionButton>
              <CaptionButton $close aria-label="Close"><svg width="8" height="8"><path d="M1 1l6 6M7 1L1 7" stroke="#fff" strokeWidth="1.800" /></svg></CaptionButton>
            </Caption>
          </TitleBar>
          <Client>
            <MenuBar>
              <MenuIcon><Comet size={19} /></MenuIcon>
              <MenuItem $active $width={48} $pad={7}><u>S</u>tart</MenuItem>
              <MenuItem $width={95} $pad={7}>ENOVIA V5 VPM</MenuItem>
              {menus.map(([a, rest, w]) => <MenuItem key={a} $width={w}><u>{a}</u>{rest}</MenuItem>)}
              <MdiButtons>
                <MdiButton aria-label="Minimize document"><svg width="10" height="10"><path d="M2 7h6v2H2z" fill="#6f7d90" /></svg></MdiButton>
                <MdiButton aria-label="Restore document"><svg width="10" height="10"><path d="M3.500 4V1.500h5v5H7M1.500 4.500h5v4h-5z" fill="none" stroke="#6f7d90" strokeWidth="1.300" /></svg></MdiButton>
                <MdiButton aria-label="Close document"><svg width="10" height="10"><path d="M2 2l6 6M8 2L2 8" stroke="#6f7d90" strokeWidth="2" /></svg></MdiButton>
              </MdiButtons>
            </MenuBar>
            <WorkArea>
              <ScrollRail>
                <ScrollButton aria-label="Scroll up"><svg width="10" height="10"><path d="M5 0l5 10H0z" /></svg></ScrollButton>
                <ScrollTrack />
                <ScrollThumb />
                <ScrollButton $down aria-label="Scroll down"><svg width="10" height="10"><path d="M0 0h10L5 10z" /></svg></ScrollButton>
              </ScrollRail>
              <Viewport><HingeScene /></Viewport>
              <SideBar>
                <ToolGroups groups={sideGroups} vertical />
                <Chevron><svg width="10" height="10"><path d="M1 1l3 3 3-3M1 5l3 3 3-3" fill="none" stroke="#fff" strokeWidth="2" /><path d="M1 1l3 3 3-3M1 5l3 3 3-3" fill="none" stroke="#9898a8" strokeWidth=".8" /></svg></Chevron>
              </SideBar>
            </WorkArea>
            <BottomBar>
              <ToolGroups groups={bottomGroups} />
              <Brand>
                <svg width="44" height="34" viewBox="0 0 44 34">
                  <path d="M11 1.500q9 1 8 3-1 2-6 3 5 0 2 3" fill="none" stroke="#d82030" strokeWidth="2" />
                  <path d="M8 12q9-1 8 4-2 7-13 9l6-10" fill="none" stroke="#33287e" strokeWidth="2" />
                  <path d="M27 9.500q-9 0-8 3 6 3 4 6-1 3-5 3" fill="none" stroke="#f09a1c" strokeWidth="2.200" />
                  <text x="9" y="30" fontFamily="Liberation Sans, sans-serif" fontSize="10" fontWeight="700" fontStyle="italic" fill="#33287e">CATIA</text>
                </svg>
              </Brand>
            </BottomBar>
            <StatusBar>
              <StatusText>Select an object or a command</StatusText>
              <CommandInput aria-label="Power input" />
              <StatusButton aria-label="Show dialog"><svg width="16" height="14" viewBox="0 0 16 14"><Emboss><path d="M2 2h6v6H2zM1 12h13V1M10 8h1" /></Emboss></svg></StatusButton>
              <StatusButton aria-label="Information"><svg width="18" height="14" viewBox="0 0 18 14"><Emboss><path d="M8 1a5 5 0 1 0 .1 0M8 3v1M7 6h1v4M3 12h12V3" /></Emboss></svg></StatusButton>
            </StatusBar>
          </Client>
        </Window>
        <Taskbar>
          <TaskButton $short aria-label="Start menu"><svg width="26" height="26"><path d="M0 4l11-2v10H0zM12 2l14-2v12H12zM0 13h11v10L0 21zM12 13h14v12l-14-2z" fill="#fff" /></svg></TaskButton>
          <TaskButton aria-label="File Explorer">
            <svg width="32" height="30"><path d="M1 4l3-3h5l2 2h7l2-1h8l2 3v20H1z" fill="#dfbf63" /><path d="M4 1h4v2H4z" fill="#18a828" /><path d="M13 3h5v2h-5z" fill="#d33" /><path d="M20 4h6v2h-6z" fill="#2878d8" /><path d="M0 8h11l3-2h18v17l-2 3H2l-2-2z" fill="#f5e296" /><path d="M4 28V18l3-3h18l3 3v10h-5v-6l-2-2H11l-2 2v6z" fill="#89cdec" stroke="#4a9cc4" /><path d="M8 12v6M5 15.500h6" stroke="#fff" strokeWidth=".8" /></svg>
          </TaskButton>
          <TaskButton aria-label="Screen Recorder">
            <svg width="32" height="32"><circle cx="16" cy="16" r="15.500" fill="#fff" /><circle cx="16" cy="16" r="12" fill="none" stroke="#c8401c" strokeWidth="2.500" /><circle cx="16" cy="16" r="7.500" fill="#d03608" /></svg>
          </TaskButton>
          <TaskButton aria-label="CATIA launcher">
            <svg width="32" height="32"><rect width="32" height="32" fill="#000" /><path d="M17 5l6-1 7 5 1 8-5 6-5 1-6-9z" fill="#5a2c1c" /><path d="M19 7l5 0 4 4 0 7-4 3-5-6z" fill="#c8743c" /><path d="M21 11l4 1-1 5-3-1z" fill="#fbd9a0" /><path d="M4 3l7 5 8 8 5 9-1 7h-3q-1-14-12-22z" fill="#12508c" /><path d="M13 11l6 5 4 9-1 6q-1-11-9-20z" fill="#5cbcec" /><path d="M7 2q9-1 6 2-2 2-5 3 5 0 2 3M3 9q8 1 6 4-2 5-8 6l5-7M20 8q-8 0-6 3 5 2 2 5-2 2-6 1" fill="none" stroke="#fff" strokeWidth="1.800" /></svg>
          </TaskButton>
          <TaskButton aria-label="ANSYS">
            <svg width="32" height="32"><defs><linearGradient id="gold" x1="0" y1="0" x2="1" y2="1"><stop offset="0" stopColor="#fff6a0" /><stop offset=".4" stopColor="#ffd21e" /><stop offset="1" stopColor="#f4a01a" /></linearGradient></defs><rect width="32" height="32" rx="7" fill="url(#gold)" /><path d="M2 29L10 0h12l8 29-2 2h-4L16 7 8 31H4z" fill="#211e1f" /></svg>
          </TaskButton>
          <TaskButton aria-label="MATLAB">
            <svg width="32" height="30"><path d="M0 17l10-6 4-1 5-7-4 14-6 6-4-4z" fill="#4a8fc0" /><path d="M7 19q6-3 9-12 3-6 6-5 4 8 10 19-6-4-10 0-3 6-8 8-1-6-4-8z" fill="#a82818" /><path d="M14 29q7-10 7-26l4 6q1 9-3 12-3 6-8 8z" fill="#f08830" /><path d="M22 3q4 8 9 17-5-3-8 0 2-8-1-17z" fill="#d4501c" /></svg>
          </TaskButton>
          <TaskButton aria-label="SolidWorks 2016">
            <svg width="34" height="36" viewBox="0 0 34 36"><path d="M2 8l14-6 15 5v19l-14 7-15-7z" fill="#a80f18" /><path d="M2 8l14-6 15 5-14 5z" fill="#e04040" /><path d="M2 8l15 4v21L2 26z" fill="#cf1824" /><g fontFamily="Liberation Sans, sans-serif" fontWeight="700" fill="#fff"><text x="5" y="21" fontSize="14">SW</text><text x="10" y="32" fontSize="10" stroke="#111" strokeWidth="2" paintOrder="stroke">2016</text></g></svg>
          </TaskButton>
          <TaskButton aria-label="KeyShot">
            <svg width="32" height="32" viewBox="0 0 32 32"><circle cx="16" cy="16" r="16" fill="#fff" /><circle cx="16" cy="16" r="14.500" fill="#1e8ff0" /><path d="M3 10l8-5 9 4M16 1l9 5 1 10M29 10l-1 10-8 5M29 22l-8 5-9-4M16 31l-9-5-1-10M3 22l1-10 8-5" stroke="#fff" strokeWidth="1.600" fill="none" /><path d="M12 9h8l4 7-4 7h-8l-4-7z" fill="#33373c" stroke="#fff" strokeWidth=".8" /></svg>
          </TaskButton>
          <TaskButton $state="open" aria-label="Chrome">
            <svg width="30" height="30" viewBox="0 0 30 30"><circle cx="15" cy="15" r="14.500" fill="#f8c944" /><path d="M2.500 7.700A14.500 14.500 0 0 1 27.600 7.700H15L8.700 18.600z" fill="#d0463c" /><path d="M2.400 7.800L8.700 18.600l6.300 3.700h3L14 29.500A14.500 14.500 0 0 1 2.400 7.800z" fill="#1c9e58" /><circle cx="15" cy="15" r="7" fill="#f4f4f4" /><circle cx="15" cy="15" r="5.500" fill="#4285f4" /></svg>
          </TaskButton>
          <TaskButton $state="active" aria-label="CATIA V5"><Comet size={32} /></TaskButton>
          <Tray>
            <TrayRow $h={44} $left={15}>
              <svg width="31" height="19"><rect x="1" y="1" width="29" height="17" fill="none" stroke="#fff" strokeWidth="2" /><path d="M4 5.500h24M4 9.500h24" stroke="#fff" strokeWidth="2.500" strokeDasharray="3 1" /><path d="M4 13.500h3M9 13.500h13M24 13.500h4" stroke="#fff" strokeWidth="2" /></svg>
            </TrayRow>
            <TrayRow $h={24} $left={10}><svg width="6" height="8"><path d="M5 0v8L1 4z" fill="#fff" /></svg></TrayRow>
            <TrayRow $h={25}>
              <svg width="16" height="16"><path d="M2 1v15" stroke="#fff" strokeWidth="2" /><path d="M3 2h6l1 2h5l-2 6H8L7 8H3z" fill="#fff" /></svg>
              <svg width="16" height="16"><path d="M4 1l4 2.500L4 6 1 3.500zM12 1L8 3.500 12 6l3-2.500zM4 6l4 2.500L4 11 1 8.500zM12 6L8 8.500l4 2.500 3-2.500zM8 10l4 2.500L8 15l-4-2.500z" fill="#fff" stroke="#b87732" strokeWidth=".6" /></svg>
            </TrayRow>
            <TrayRow $h={24}>
              <svg width="16" height="16"><path d="M2 1v4M5 1v4M1 5.500h5v3H1zM3.500 8v7" stroke="#fff" strokeWidth="1.500" /><rect x="8.500" y="2.500" width="6" height="12" fill="none" stroke="#fff" strokeWidth="2" /><path d="M10 1h3" stroke="#fff" /></svg>
              <svg width="16" height="14"><path d="M1 11h2v3H1zM4 9h2v5H4zM7 6h2v8H7zM10 4h2v10h-2z" fill="#fff" /><path d="M13 1h2v13h-2z" fill="#a8937c" /></svg>
            </TrayRow>
            <TrayRow $h={25}>
              <svg width="18" height="14"><path d="M1 5h3l4-4v12L4 9H1z" fill="#fff" /><path d="M10 4q2 3 0 6M12 2q4 5 0 10" stroke="#fff" fill="none" strokeWidth="1.300" /></svg>
            </TrayRow>
            <Clock>1:20 AM</Clock>
            <Clock>2/15/2018</Clock>
          </Tray>
        </Taskbar>
      </Desktop>
    </>
  );
}
